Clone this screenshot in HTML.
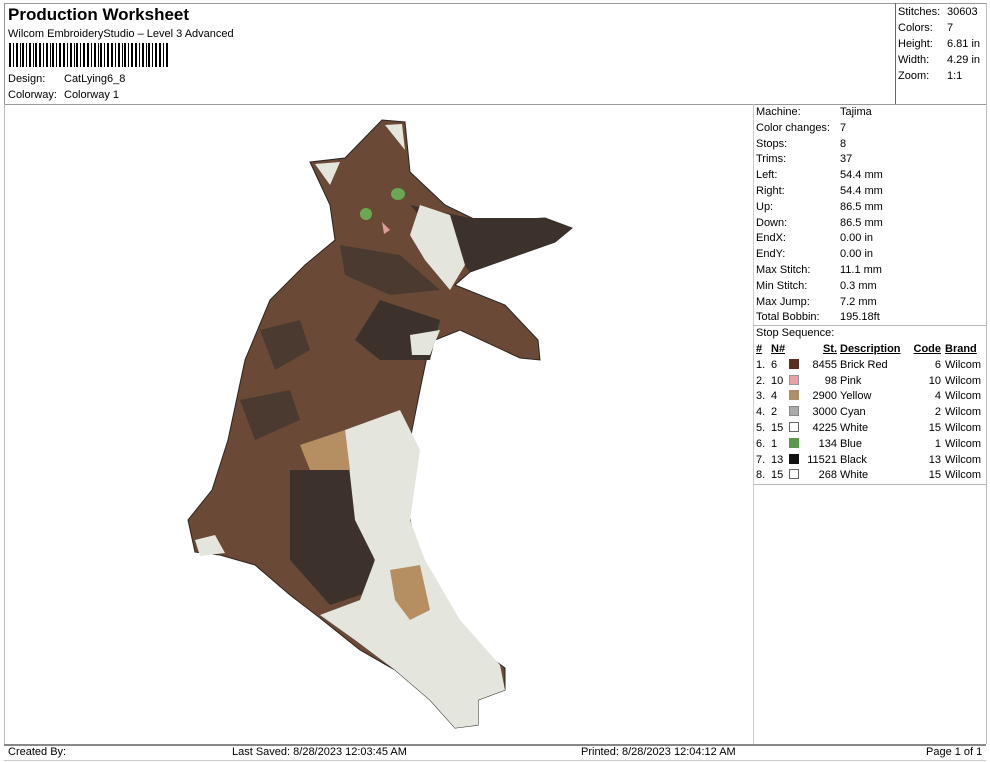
<!DOCTYPE html>
<html><head><style>
*{margin:0;padding:0;box-sizing:border-box}
body{width:990px;height:762px;background:#fff;font-family:"Liberation Sans",Arial,sans-serif;font-size:11px;color:#000;position:relative;overflow:hidden}
.a{position:absolute;white-space:nowrap}
.l{position:absolute;background:#999}
</style></head><body>
<div class="l" style="left:4px;top:3px;width:982px;height:1px"></div>
<div class="l" style="left:4px;top:3px;width:1px;height:101px"></div>
<div class="l" style="left:986px;top:3px;width:1px;height:741px;background:#bbb"></div>
<div class="l" style="left:895px;top:3px;width:1px;height:101px;background:#666"></div>
<div class="l" style="left:4px;top:104px;width:982px;height:1px"></div>
<div class="l" style="left:4px;top:104px;width:1px;height:640px;background:#bbb"></div>
<div class="l" style="left:753px;top:104px;width:1px;height:640px;background:#ccc"></div>
<div class="l" style="left:753px;top:325px;width:233px;height:1px;background:#bbb"></div>
<div class="l" style="left:753px;top:484px;width:233px;height:1px;background:#bbb"></div>
<div class="l" style="left:4px;top:744px;width:982px;height:2px;background:#888"></div>
<div class="l" style="left:4px;top:760px;width:982px;height:1px;background:#ccc"></div>

<div class="a" style="left:8px;top:5px;font-size:17px;font-weight:bold">Production Worksheet</div>
<div class="a" style="left:8px;top:28px">Wilcom EmbroideryStudio – Level 3 Advanced</div>
<svg class="a" style="left:9px;top:43px" width="161" height="24">
<g fill="#000">
<rect x="0" y="0" width="2" height="24"/><rect x="4" y="0" width="1" height="24"/><rect x="7" y="0" width="2" height="24"/><rect x="11" y="0" width="1" height="24"/><rect x="13" y="0" width="2" height="24"/><rect x="17" y="0" width="1" height="24"/><rect x="20" y="0" width="2" height="24"/><rect x="24" y="0" width="1" height="24"/><rect x="26" y="0" width="2" height="24"/><rect x="30" y="0" width="2" height="24"/><rect x="34" y="0" width="1" height="24"/><rect x="37" y="0" width="2" height="24"/><rect x="41" y="0" width="1" height="24"/><rect x="43" y="0" width="2" height="24"/><rect x="47" y="0" width="1" height="24"/><rect x="50" y="0" width="2" height="24"/><rect x="54" y="0" width="2" height="24"/><rect x="58" y="0" width="1" height="24"/><rect x="61" y="0" width="2" height="24"/><rect x="65" y="0" width="1" height="24"/><rect x="67" y="0" width="2" height="24"/><rect x="71" y="0" width="1" height="24"/><rect x="74" y="0" width="2" height="24"/><rect x="78" y="0" width="2" height="24"/><rect x="82" y="0" width="1" height="24"/><rect x="85" y="0" width="2" height="24"/><rect x="89" y="0" width="1" height="24"/><rect x="91" y="0" width="2" height="24"/><rect x="95" y="0" width="1" height="24"/><rect x="98" y="0" width="2" height="24"/><rect x="102" y="0" width="2" height="24"/><rect x="106" y="0" width="1" height="24"/><rect x="109" y="0" width="2" height="24"/><rect x="113" y="0" width="1" height="24"/><rect x="115" y="0" width="2" height="24"/><rect x="119" y="0" width="1" height="24"/><rect x="122" y="0" width="2" height="24"/><rect x="126" y="0" width="2" height="24"/><rect x="130" y="0" width="1" height="24"/><rect x="133" y="0" width="2" height="24"/><rect x="137" y="0" width="1" height="24"/><rect x="139" y="0" width="2" height="24"/><rect x="143" y="0" width="1" height="24"/><rect x="146" y="0" width="2" height="24"/><rect x="150" y="0" width="2" height="24"/><rect x="154" y="0" width="1" height="24"/><rect x="157" y="0" width="2" height="24"/>
</g></svg>
<div class="a" style="left:8px;top:73px">Design:</div><div class="a" style="left:64px;top:73px">CatLying6_8</div>
<div class="a" style="left:8px;top:89px">Colorway:</div><div class="a" style="left:64px;top:89px">Colorway 1</div>

<div class="a" style="left:898px;top:6px">Stitches:</div><div class="a" style="left:947px;top:6px">30603</div>
<div class="a" style="left:898px;top:22px">Colors:</div><div class="a" style="left:947px;top:22px">7</div>
<div class="a" style="left:898px;top:38px">Height:</div><div class="a" style="left:947px;top:38px">6.81 in</div>
<div class="a" style="left:898px;top:54px">Width:</div><div class="a" style="left:947px;top:54px">4.29 in</div>
<div class="a" style="left:898px;top:70px">Zoom:</div><div class="a" style="left:947px;top:70px">1:1</div>

<div style="position:absolute;left:756px;top:105px;line-height:15.8px">
<div>Machine:</div><div>Color changes:</div><div>Stops:</div><div>Trims:</div><div>Left:</div><div>Right:</div><div>Up:</div><div>Down:</div><div>EndX:</div><div>EndY:</div><div>Max Stitch:</div><div>Min Stitch:</div><div>Max Jump:</div><div>Total Bobbin:</div><div>Stop Sequence:</div>
</div>
<div style="position:absolute;left:840px;top:105px;line-height:15.8px">
<div>Tajima</div><div>7</div><div>8</div><div>37</div><div>54.4 mm</div><div>54.4 mm</div><div>86.5 mm</div><div>86.5 mm</div><div>0.00 in</div><div>0.00 in</div><div>11.1 mm</div><div>0.3 mm</div><div>7.2 mm</div><div>195.18ft</div>
</div>
<table style="position:absolute;left:756px;top:342px;border-collapse:collapse;font-size:11px;line-height:15.8px">
<tr style="font-weight:bold;text-decoration:underline"><td style="width:15px">#</td><td style="width:18px">N#</td><td style="width:18px"></td><td style="width:30px;text-align:right">St.</td><td style="width:70px;padding-left:3px">Description</td><td style="width:34px;text-align:right">Code</td><td style="padding-left:4px">Brand</td></tr>
<tr><td>1.</td><td>6</td><td><span style="display:inline-block;width:10px;height:10px;background:#5a2f22;vertical-align:-1px"></span></td><td style="text-align:right">8455</td><td style="padding-left:3px">Brick Red</td><td style="text-align:right">6</td><td style="padding-left:4px">Wilcom</td></tr>
<tr><td>2.</td><td>10</td><td><span style="display:inline-block;width:10px;height:10px;background:#e8a0a4;border:1px solid #999;vertical-align:-1px"></span></td><td style="text-align:right">98</td><td style="padding-left:3px">Pink</td><td style="text-align:right">10</td><td style="padding-left:4px">Wilcom</td></tr>
<tr><td>3.</td><td>4</td><td><span style="display:inline-block;width:10px;height:10px;background:#b08d6a;vertical-align:-1px"></span></td><td style="text-align:right">2900</td><td style="padding-left:3px">Yellow</td><td style="text-align:right">4</td><td style="padding-left:4px">Wilcom</td></tr>
<tr><td>4.</td><td>2</td><td><span style="display:inline-block;width:10px;height:10px;background:#aaa;border:1px solid #888;vertical-align:-1px"></span></td><td style="text-align:right">3000</td><td style="padding-left:3px">Cyan</td><td style="text-align:right">2</td><td style="padding-left:4px">Wilcom</td></tr>
<tr><td>5.</td><td>15</td><td><span style="display:inline-block;width:10px;height:10px;background:#fff;border:1px solid #666;vertical-align:-1px"></span></td><td style="text-align:right">4225</td><td style="padding-left:3px">White</td><td style="text-align:right">15</td><td style="padding-left:4px">Wilcom</td></tr>
<tr><td>6.</td><td>1</td><td><span style="display:inline-block;width:10px;height:10px;background:#5a9a4a;vertical-align:-1px"></span></td><td style="text-align:right">134</td><td style="padding-left:3px">Blue</td><td style="text-align:right">1</td><td style="padding-left:4px">Wilcom</td></tr>
<tr><td>7.</td><td>13</td><td><span style="display:inline-block;width:10px;height:10px;background:#111;vertical-align:-1px"></span></td><td style="text-align:right">11521</td><td style="padding-left:3px">Black</td><td style="text-align:right">13</td><td style="padding-left:4px">Wilcom</td></tr>
<tr><td>8.</td><td>15</td><td><span style="display:inline-block;width:10px;height:10px;background:#fff;border:1px solid #666;vertical-align:-1px"></span></td><td style="text-align:right">268</td><td style="padding-left:3px">White</td><td style="text-align:right">15</td><td style="padding-left:4px">Wilcom</td></tr>
</table>

<svg class="a" style="left:0;top:0" width="753" height="744">
<polygon fill="#6a4a36" stroke="#2a2420" stroke-width="1" points="310,162 345,158 382,120 405,122 410,172 445,205 480,222 545,218 572,228 555,242 470,272 455,285 505,305 538,340 540,360 520,358 460,330 430,342 420,390 410,440 405,500 420,560 450,610 480,650 505,668 505,690 478,700 478,725 455,728 430,700 395,670 360,650 320,618 290,595 255,565 220,555 195,552 188,520 212,490 228,440 245,360 270,300 305,265 335,240 330,205"/>
<polygon fill="#3d322b" points="410,205 470,218 545,218 572,228 555,242 470,272 460,260"/>
<polygon fill="#3d322b" points="290,470 370,470 375,590 330,605 290,560"/>
<polygon fill="#3d322b" points="380,300 440,320 430,360 380,360 355,340"/>
<polygon fill="#4a3a30" points="340,245 400,255 440,290 390,295 345,275"/>
<polygon fill="#4a3a30" points="260,330 300,320 310,350 275,370"/>
<polygon fill="#4a3a30" points="240,400 290,390 300,420 255,440"/>
<polygon fill="#e4e5dc" points="420,205 450,215 465,265 450,290 425,260 410,235"/>
<polygon fill="#e4e5dc" points="345,430 400,410 420,450 410,520 425,560 460,620 500,665 505,690 478,700 478,725 455,728 430,700 395,670 355,640 320,615 360,600 375,560 355,520"/>
<polygon fill="#b58e62" points="390,570 420,565 430,610 410,620 395,600"/>
<polygon fill="#b58e62" points="300,445 345,430 350,470 310,470"/>
<polygon fill="#e4e5dc" points="410,335 440,330 430,355 412,355"/>
<polygon fill="#e4e5dc" points="195,540 215,535 225,553 200,556"/>
<polygon fill="#e4e5dc" points="315,164 340,162 330,185"/>
<polygon fill="#e4e5dc" points="385,125 402,124 405,150"/>
<ellipse cx="398" cy="194" rx="7" ry="6" fill="#6aa854"/>
<ellipse cx="366" cy="214" rx="6" ry="6" fill="#6aa854"/>
<path d="M382,222 l8,8 l-6,4z" fill="#e09a9a"/>
</svg>

<div class="a" style="left:8px;top:746px">Created By:</div>
<div class="a" style="left:232px;top:746px">Last Saved: 8/28/2023 12:03:45 AM</div>
<div class="a" style="left:581px;top:746px">Printed: 8/28/2023 12:04:12 AM</div>
<div class="a" style="left:926px;top:746px">Page 1 of 1</div>
</body></html>
